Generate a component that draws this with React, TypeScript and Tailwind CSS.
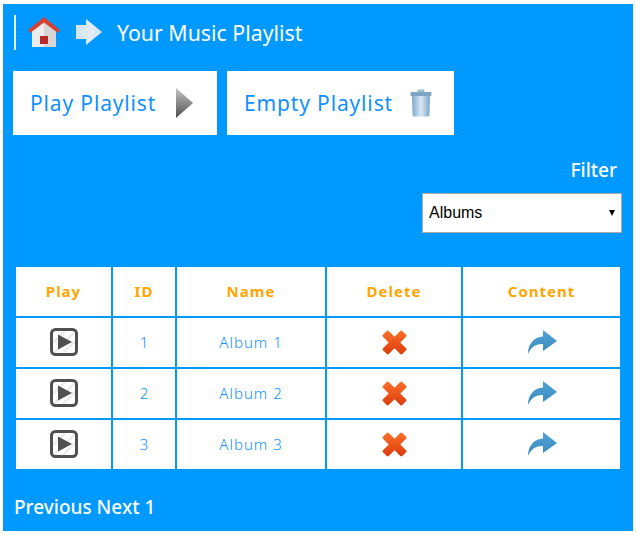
import { useId } from 'react'

const FONT = "font-['Noto_Sans','Open_Sans',sans-serif]"

function HomeIcon() {
  return (
    <svg width="34" height="34" viewBox="0 0 34 34" className="shrink-0">
      <path d="M4 15 L16 5 L16 31 L4 31 Z" fill="#ececec" />
      <path d="M16 5 L28 15 L28 31 L16 31 Z" fill="#d6d6d6" />
      <path d="M0 14 L16 1 L32 14 L30 17 L16 6.5 L2 17 Z" fill="#d64132" />
      <rect x="12" y="20" width="8" height="8" fill="#b52b28" />
    </svg>
  )
}

function NavArrow() {
  return (
    <svg width="28" height="28" viewBox="0 0 28 28" className="shrink-0">
      <defs>
        <linearGradient id="nav" x1="0" x2="1" y1="0" y2="0">
          <stop offset="0" stopColor="#d3e3f0" />
          <stop offset="0.6" stopColor="#e2edf5" />
          <stop offset="1" stopColor="#cfe6f7" />
        </linearGradient>
      </defs>
      <path d="M1 7 L11 7 L11 1 L27 14 L11 27 L11 21 L1 21 Z" fill="url(#nav)" style={{ filter: 'blur(0.7px)' }} />
    </svg>
  )
}

function PlayTriangle() {
  return (
    <svg width="18" height="30" viewBox="0 0 18 30">
      <defs>
        <linearGradient id="tri" x1="0" x2="0" y1="0" y2="1">
          <stop offset="0" stopColor="#c4c4c4" />
          <stop offset="1" stopColor="#4f4f4f" />
        </linearGradient>
      </defs>
      <path d="M0 0 L17 15 L0 30 Z" fill="url(#tri)" />
    </svg>
  )
}

function TrashIcon() {
  return (
    <svg width="22" height="28" viewBox="0 0 22 28">
      <defs>
        <linearGradient id="can" x1="0" x2="1" y1="0" y2="0">
          <stop offset="0" stopColor="#7fa9c9" />
          <stop offset="0.5" stopColor="#d6e8f5" />
          <stop offset="1" stopColor="#7ea6c4" />
        </linearGradient>
      </defs>
      <rect x="7.5" y="0.5" width="7" height="3" rx="1" fill="#9fbdd3" />
      <rect x="0.5" y="3" width="21" height="4" rx="1" fill="#7da4c1" />
      <path d="M2 7 H20 L19.5 26 Q19.5 27.5 18 27.5 H4 Q2.5 27.5 2.5 26 Z" fill="url(#can)" />
    </svg>
  )
}

function RowPlay() {
  return (
    <svg width="28" height="28" viewBox="0 0 28 28" className="mb-[1px]">
      <path d="M5 24 L24 5 M13 25 L25 13 M3 15 L15 3" stroke="#ececec" strokeWidth="2.5" />
      <rect x="1.5" y="1.5" width="25" height="25" rx="4" fill="none" stroke="#505050" strokeWidth="3" />
      <path d="M8 6.5 L22 14 L8 21.5 Z" fill="#505050" />
    </svg>
  )
}

function DeleteX() {
  const id = useId()
  return (
    <svg width="27" height="27" viewBox="0 0 28 28" className="mb-[1px]">
      <defs>
        <linearGradient id={id} x1="0" x2="0" y1="0" y2="1">
          <stop offset="0" stopColor="#fb7029" />
          <stop offset="1" stopColor="#dd3a0b" />
        </linearGradient>
      </defs>
      <path
        d="M2 6 L6 2 Q7 1 8 2 L14 8 L20 2 Q21 1 22 2 L26 6 Q27 7 26 8 L20 14 L26 20 Q27 21 26 22 L22 26 Q21 27 20 26 L14 20 L8 26 Q7 27 6 26 L2 22 Q1 21 2 20 L8 14 L2 8 Q1 7 2 6 Z"
        fill={`url(#${id})`}
      />
    </svg>
  )
}

function ShareArrow() {
  const id = useId()
  return (
    <svg width="30" height="24" viewBox="0 0 30 24" className="mb-[1px]">
      <defs>
        <linearGradient id={id} x1="0" x2="0" y1="0" y2="1">
          <stop offset="0" stopColor="#4da3d8" />
          <stop offset="1" stopColor="#3d89bc" />
        </linearGradient>
      </defs>
      <path d="M1 24 C1 14 7 7 16 6.5 L16 0 L30 11 L16 21 L16 14 C9 13.5 4 17 1 24 Z" fill={`url(#${id})`} />
    </svg>
  )
}

const rows = [
  { id: 1, name: 'Album 1' },
  { id: 2, name: 'Album 2' },
  { id: 3, name: 'Album 3' },
]

const headers = ['Play', 'ID', 'Name', 'Delete', 'Content']

export default function App() {
  return (
    <div className={`min-h-[535px] bg-white pl-[3px] pt-[4px] ${FONT}`}>
      <div className="h-[527px] w-[630px] bg-[#0099ff] text-white">
        {/* Title bar */}
        <div className="flex h-[67px] items-start pl-[11px] pt-[11px]">
          <div className="h-[35px] w-[2px] bg-[#e3f2fd]" />
          <div className="ml-[12px] mt-[1px]"><HomeIcon /></div>
          <div className="ml-[13px] mt-[3px]"><NavArrow /></div>
          <h1 className="ml-[14px] text-[21.3px] font-normal leading-[35px]">Your Music Playlist</h1>
        </div>

        {/* Buttons */}
        <div className="flex gap-[10px] pl-[10px]">
          <button className="flex h-[64px] w-[204px] items-center bg-white pl-[17px] text-[21px] tracking-[0.85px] text-[#1090ff]">
            <span className="mt-[2px]">Play Playlist</span>
            <span className="ml-[20px] flex"><PlayTriangle /></span>
          </button>
          <button className="flex h-[64px] w-[227px] items-center bg-white pl-[17px] text-[21px] tracking-[0.85px] text-[#1090ff]">
            <span className="mt-[2px]">Empty Playlist</span>
            <span className="ml-[17px] flex"><TrashIcon /></span>
          </button>
        </div>

        {/* Filter */}
        <div className="flex flex-col items-end">
          <label className="mr-[16px] mt-[21px] text-[19px] font-medium leading-[28px]">Filter</label>
          <div className="relative mr-[11px] mt-[9px]">
            <select className="block h-[40px] w-[200px] appearance-none border border-[#aaaaaa] bg-white pl-[6px] font-['Liberation_Sans',sans-serif] text-[16px] text-black">
              <option>Albums</option>
            </select>
            {/* native arrow is a chevron here, the reference has a small filled one */}
            <span className="pointer-events-none absolute right-[7px] top-[17px] h-0 w-0 border-x-[3.5px] border-t-[6px] border-x-transparent border-t-black" />
          </div>
        </div>

        {/* Table */}
        <div className="ml-[13px] mt-[34px] grid w-[604px] grid-cols-[95px_62px_148px_134px_157px] gap-[2px] auto-rows-[49px]">
          {headers.map((h) => (
            <div key={h} className="flex items-center justify-center bg-white text-[15px] font-bold tracking-[1px] text-[#ffa500]">
              {h}
            </div>
          ))}
          {rows.map((r) => [
            <div key={`${r.id}-play`} className="flex items-center justify-center bg-white"><RowPlay /></div>,
            <div key={`${r.id}-id`} className="flex items-center justify-center bg-white text-[15px] font-light text-[#0f8fff]">{r.id}</div>,
            <div key={`${r.id}-name`} className="flex items-center justify-center bg-white text-[15px] font-light tracking-[1px] text-[#0f8fff]">{r.name}</div>,
            <div key={`${r.id}-del`} className="flex items-center justify-center bg-white"><DeleteX /></div>,
            <div key={`${r.id}-content`} className="flex items-center justify-center bg-white"><ShareArrow /></div>,
          ])}
        </div>

        {/* Pager */}
        <div className="ml-[11px] mt-[24px] text-[19px] font-medium leading-[28px]">Previous Next 1</div>
      </div>
    </div>
  )
}
